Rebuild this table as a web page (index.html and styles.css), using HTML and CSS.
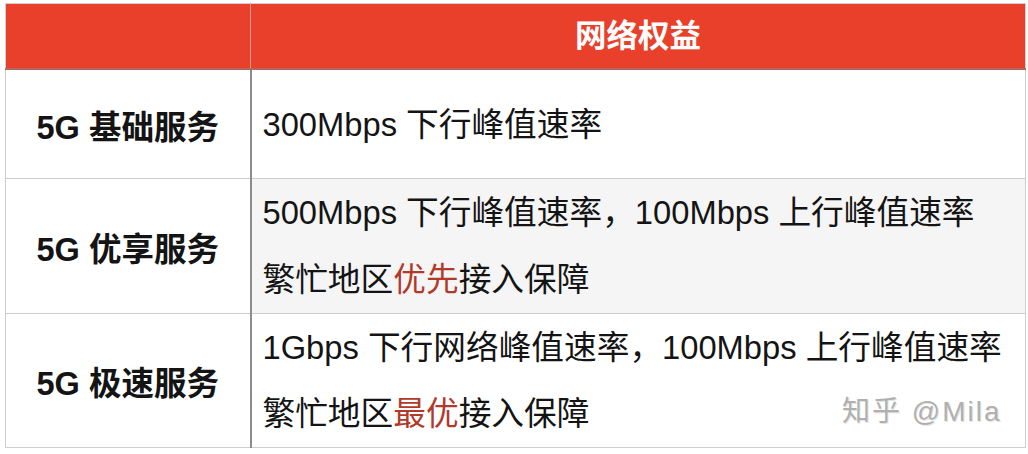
FILE: index.html
```html
<!DOCTYPE html>
<html lang="zh">
<head>
    <meta charset="UTF-8">
    <title>5G 网络权益</title>
    <link rel="stylesheet" href="styles.css">
</head>
<body>
    <div class="sheet">
        <table class="plans">
            <tr class="head">
                <th class="name"></th>
                <th class="detail">网络权益</th>
            </tr>
            <tr class="row-basic">
                <td class="name">5G 基础服务</td>
                <td class="detail">300Mbps 下行峰值速率</td>
            </tr>
            <tr class="row-plus">
                <td class="name">5G 优享服务</td>
                <td class="detail shaded">
                    <div class="line">500Mbps 下行峰值速率，100Mbps 上行峰值速率</div>
                    <div class="line">繁忙地区<span class="hl">优先</span>接入保障</div>
                </td>
            </tr>
            <tr class="row-max">
                <td class="name">5G 极速服务</td>
                <td class="detail">
                    <div class="line">1Gbps 下行网络峰值速率，100Mbps 上行峰值速率</div>
                    <div class="line">繁忙地区<span class="hl">最优</span>接入保障</div>
                </td>
            </tr>
        </table>
        <div class="watermark">知乎 @Mila</div>
    </div>
</body>
</html>
```

FILE: styles.css
```css
body {
    margin: 0;
    background: #ffffff;
    font-family: "Liberation Sans", "Noto Sans CJK SC", sans-serif;
    color: #141414;
}
.sheet {
    position: relative;
    padding: 3px 0 0 5px;
}
.plans {
    border-collapse: collapse;
    border: 1px solid #cfcfcf;
    width: 1021px;
    table-layout: fixed;
}
.plans th,
.plans td {
    padding: 0;
    border-top: 1px solid #cdcdcd;
}
.plans .name {
    width: 244px;
    text-align: center;
    font-weight: bold;
    font-size: 32.5px;
    border-right: 2px solid #8c8c8c;
}
.plans .detail {
    font-size: 32.7px;
    padding-left: 11px;
    line-height: 67px;
}
.plans .head th {
    background: #e8402a;
    height: 64px;
    line-height: 40px;
    border-bottom: 2px solid #b0695c;
    border-top: none;
}
.plans .head th.name {
    border-right: 1px solid #f19a8a;
}
.plans .head th.detail {
    color: #fff;
    text-align: center;
    font-size: 31.5px;
    font-weight: bold;
    padding-left: 0;
}
.row-basic td {
    height: 108px;
}
.row-plus td {
    height: 134px;
}
.row-max td {
    height: 133px;
}
.shaded {
    background: #f5f5f5;
}
.line {
    height: 67px;
    white-space: nowrap;
}
.row-max .line {
    height: 66px;
    line-height: 66px;
}
.hl {
    color: #b23a2b;
}
.watermark {
    position: absolute;
    left: 842px;
    top: 389px;
    font-size: 28px;
    letter-spacing: 2px;
    color: #b0b0b0;
    text-shadow: 1px 1px 0 #e4e4e4;
    white-space: nowrap;
}
```
